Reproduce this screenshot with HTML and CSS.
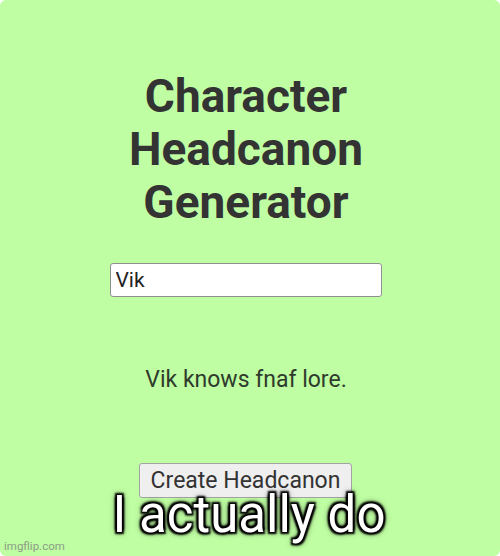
FILE: index.html
```html
<!DOCTYPE html>
<html lang="en">
<head>
  <meta charset="UTF-8" />
  <meta name="viewport" content="width=device-width, initial-scale=1" />
  <title>Character Headcanon Generator</title>
  <link rel="stylesheet" href="styles.css">
</head>
<body>
  <div class="page">
    <div class="generator">
      <h1>Character Headcanon Generator</h1>
      <input class="name-input" type="text" value="Vik" />
      <p class="result">Vik knows fnaf lore.</p>
      <button class="create-btn" type="button">Create Headcanon</button>
    </div>

    <div class="caption">I actually do</div>
    <div class="watermark">imgflip.com</div>
  </div>
</body>
</html>
```

FILE: styles.css
```css
html, body {
  margin: 0;
  background-color: #ffffff;
}

.page {
  position: relative;
  width: 500px;
  height: 556px;
  background-color: #bffea2;
  border-radius: 6px;
  overflow: hidden;
  font-family: 'Roboto', 'Liberation Sans', sans-serif;
  color: #333333;
}

.generator {
  display: flex;
  flex-direction: column;
  align-items: center;
  padding: 70px 8px 0 0;
}

h1 {
  width: 260px;
  margin: 0;
  font-size: 46px;
  font-weight: 700;
  line-height: 52.8px;
  text-align: center;
}

.name-input {
  box-sizing: border-box;
  width: 272px;
  height: 34px;
  margin: 35px 0 0 -1px;
  padding: 0 5px;
  font-family: 'Roboto', 'Liberation Sans', sans-serif;
  font-size: 21px;
  color: #222222;
  background: #ffffff;
  border: 1px solid #8f8f8f;
  border-radius: 3px;
}

.result {
  margin: 69px 0 0 0;
  font-size: 23px;
  line-height: 1.2;
  color: #2f3b2c;
}

.create-btn {
  box-sizing: border-box;
  height: 35px;
  margin: 69px 0 0 -1px;
  padding: 0 11px;
  font-family: 'Roboto', 'Liberation Sans', sans-serif;
  font-size: 23px;
  color: #333333;
  background: #efefef;
  border: 1px solid #a3a3a3;
  border-radius: 3px;
}

/* meme caption sits over the button */
.caption {
  position: absolute;
  left: 0;
  right: 0;
  top: 486px;
  margin-left: -2px;
  text-align: center;
  font-size: 51px;
  line-height: 58px;
  color: #ffffff;
  text-shadow:
    0 0 2px #000,
    0 0 2px #000,
    2px 2px 2px #000,
    -2px -2px 2px #000,
    2px -2px 2px #000,
    -2px 2px 2px #000,
    0 0 7px rgba(0, 0, 0, 0.8);
}

.watermark {
  position: absolute;
  left: 4px;
  bottom: 3px;
  font-size: 11.5px;
  color: #8c9c86;
}
```
